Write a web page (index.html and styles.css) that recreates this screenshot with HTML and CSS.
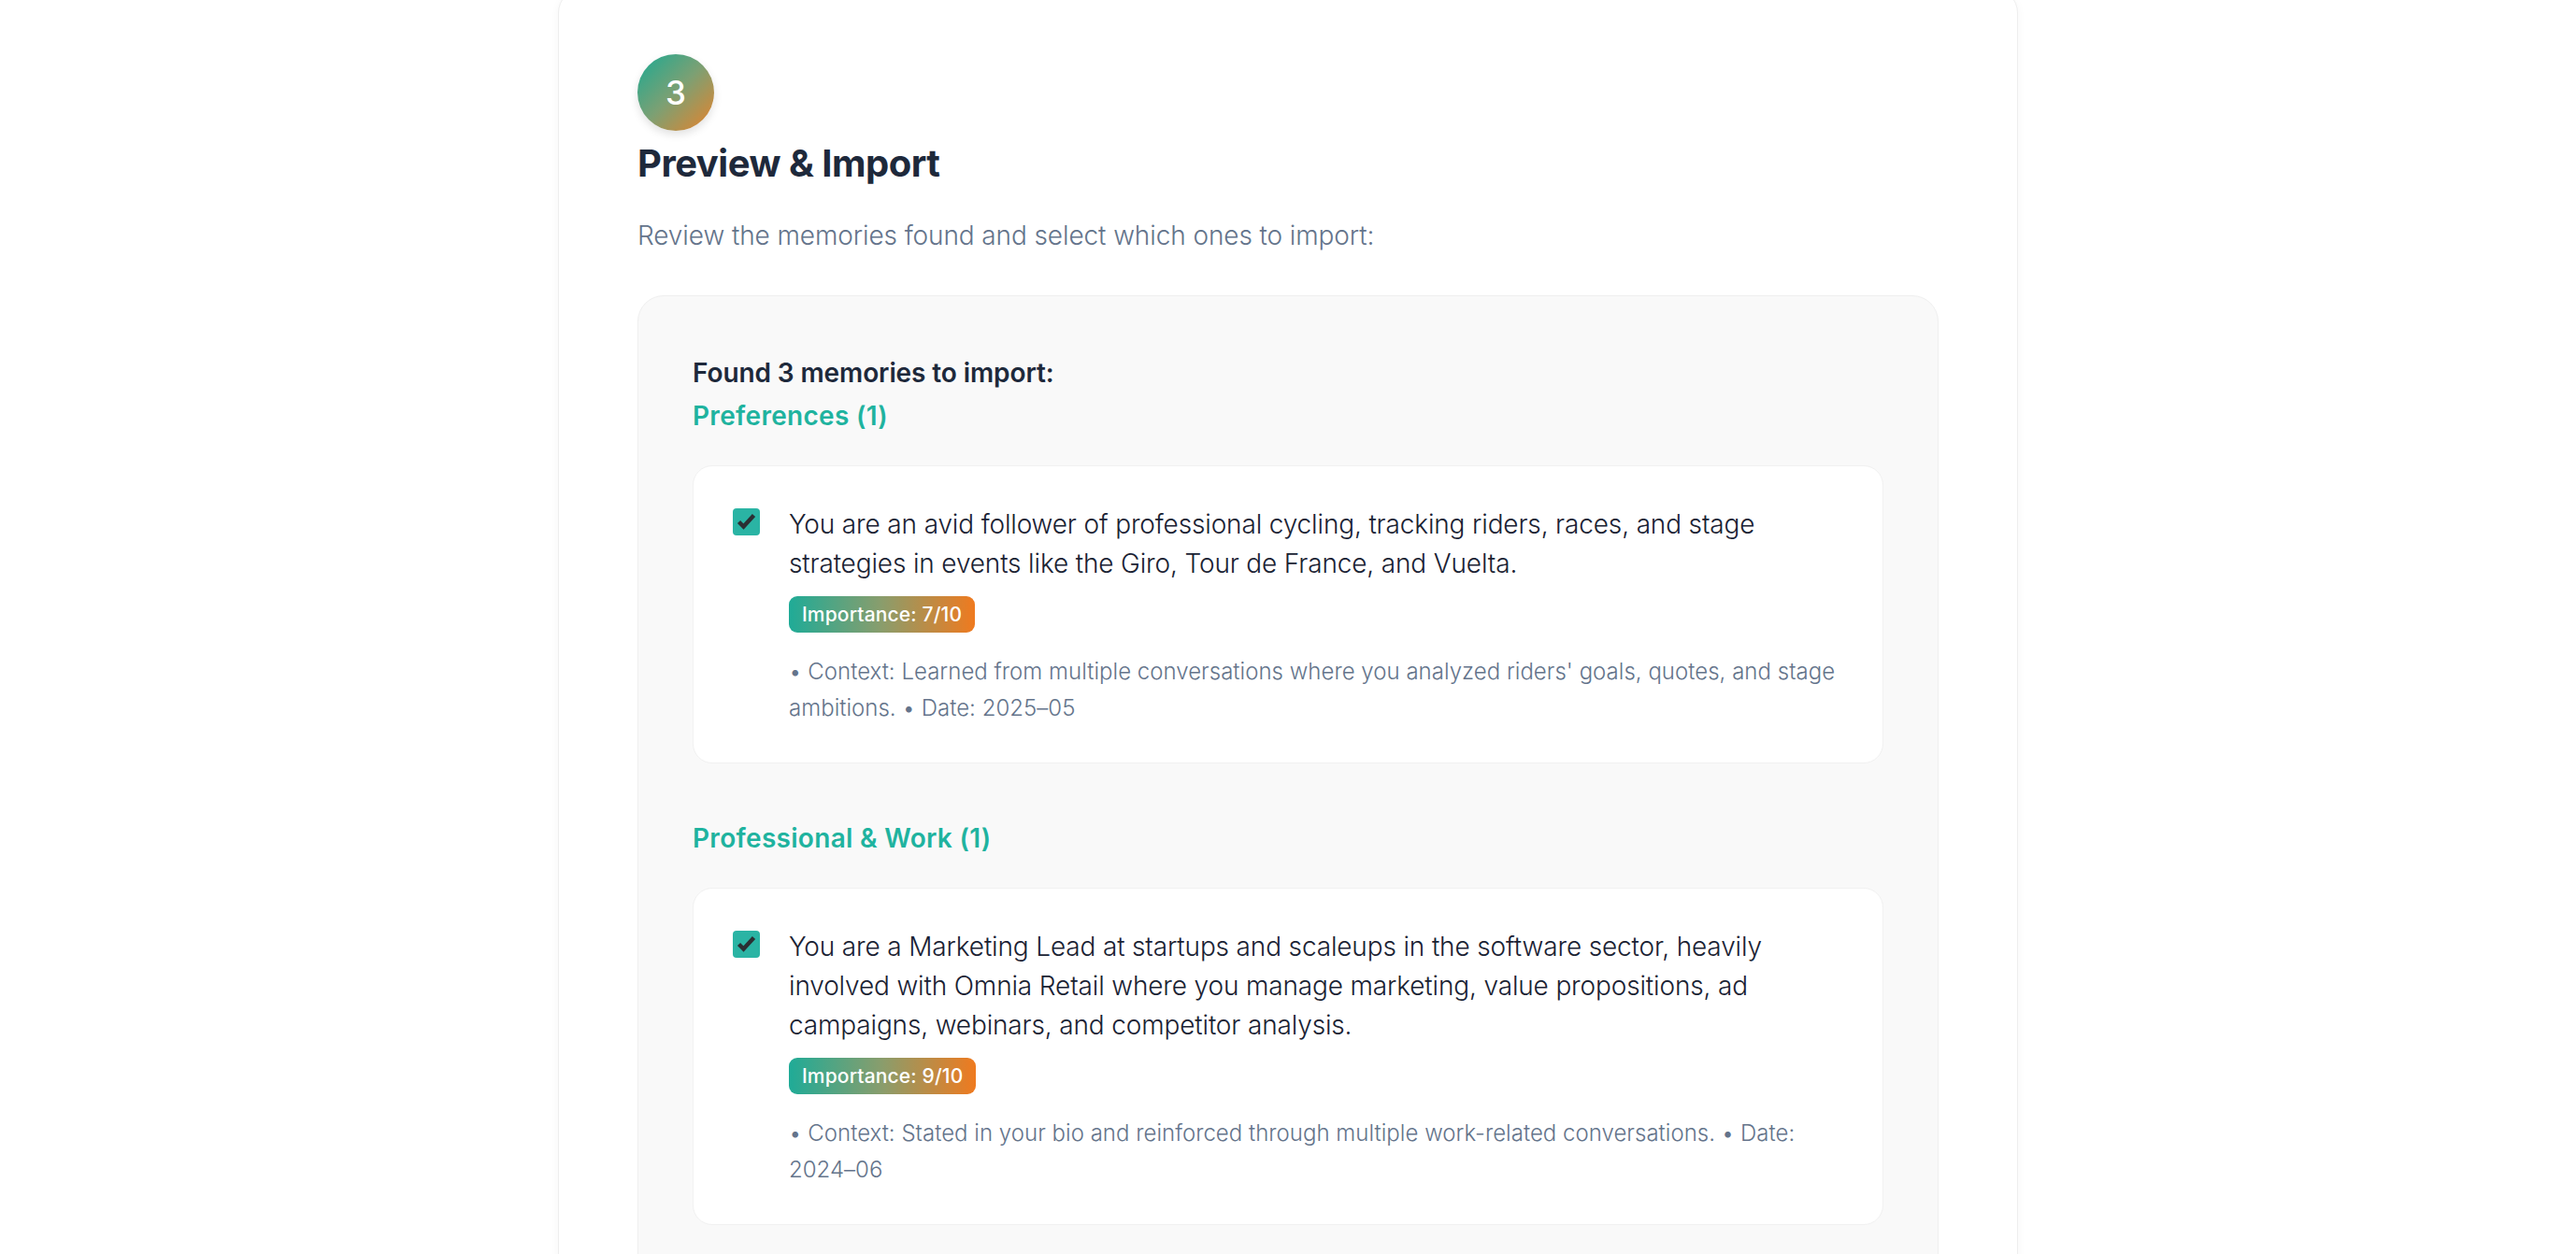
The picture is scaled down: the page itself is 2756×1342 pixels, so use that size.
FILE: index.html
```html
<!DOCTYPE html>
<html lang="en">
<head>
<meta charset="utf-8">
<title>Preview &amp; Import</title>
<link rel="stylesheet" href="styles.css">
</head>
<body>
<main class="page">
  <section class="step-card">
    <div class="step-num">3</div>
    <h2 class="step-title">Preview &amp; Import</h2>
    <p class="step-desc">Review the memories found and select which ones to import:</p>

    <div class="preview-box">
      <p class="found">Found 3 memories to import:</p>

      <div class="group">
        <h3 class="group-title">Preferences (1)</h3>
        <div class="memory">
          <span class="check"><svg viewBox="0 0 29 29" width="29" height="29"><path d="M6.5 14.5 L11.5 19.5 L22.5 7.5" fill="none" stroke="#2b2f33" stroke-width="4.4"/></svg></span>
          <div class="memory-body">
            <p class="memory-text">You are an avid follower of professional cycling, tracking riders, races, and stage strategies in events like the Giro, Tour de France, and Vuelta.</p>
            <span class="badge">Importance: 7/10</span>
            <p class="memory-meta">• Context: Learned from multiple conversations where you analyzed riders' goals, quotes, and stage ambitions. • Date: 2025&#8288;–&#8288;05</p>
          </div>
        </div>
      </div>

      <div class="group">
        <h3 class="group-title">Professional &amp; Work (1)</h3>
        <div class="memory">
          <span class="check"><svg viewBox="0 0 29 29" width="29" height="29"><path d="M6.5 14.5 L11.5 19.5 L22.5 7.5" fill="none" stroke="#2b2f33" stroke-width="4.4"/></svg></span>
          <div class="memory-body">
            <p class="memory-text">You are a Marketing Lead at startups and scaleups in the software sector, heavily involved with Omnia Retail where you manage marketing, value propositions, ad campaigns, webinars, and competitor analysis.</p>
            <span class="badge">Importance: 9/10</span>
            <p class="memory-meta">• Context: Stated in your bio and reinforced through multiple work-related conversations. • Date: 2024&#8288;–&#8288;06</p>
          </div>
        </div>
      </div>
    </div>
  </section>
</main>
</body>
</html>
```

FILE: styles.css
```css
* { box-sizing: border-box; }

html, body {
  margin: 0;
  padding: 0;
  background: #ffffff;
  overflow: hidden;
}

body {
  font-family: "Inter", "Liberation Sans", sans-serif;
  color: #1e293b;
}

.page {
  display: flex;
  justify-content: center;
}

.step-card {
  width: 1562px;
  margin-top: -14px;
  background: #ffffff;
  border: 1px solid #eeeeee;
  border-radius: 28px;
  box-shadow: 0 2px 10px rgba(0, 0, 0, 0.04);
  padding: 71px 84px 80px;
}

.step-num {
  width: 82px;
  height: 82px;
  border-radius: 50%;
  background: linear-gradient(135deg, #1aaa93 0%, #7da073 50%, #e8822a 100%);
  box-shadow: 0 4px 10px rgba(0, 0, 0, 0.12);
  color: #ffffff;
  font-size: 35px;
  font-weight: 500;
  display: flex;
  align-items: center;
  justify-content: center;
}

.step-title {
  margin: 11px 0 0;
  font-size: 40px;
  line-height: 48px;
  font-weight: 700;
  letter-spacing: -0.5px;
  color: #1e293b;
}

.step-desc {
  margin: 32px 0 0;
  font-size: 28px;
  line-height: 42px;
  font-weight: 300;
  color: #64748b;
  letter-spacing: -0.1px;
}

.preview-box {
  margin-top: 43px;
  background: #f9f9f9;
  border: 1px solid #efefef;
  border-radius: 28px;
  padding: 61px 58px 60px;
}

.found {
  margin: 0;
  font-size: 28px;
  line-height: 42px;
  font-weight: 600;
  color: #1e293b;
  letter-spacing: -0.1px;
}

.group + .group {
  margin-top: 59px;
}

.group-title {
  margin: 4px 0 32px;
  font-size: 28px;
  line-height: 42px;
  font-weight: 600;
  color: #1fb39f;
  letter-spacing: 0.3px;
}

.memory {
  background: #ffffff;
  border: 1px solid #f1f1f1;
  border-radius: 21px;
  padding: 41px 42px 39px;
  display: flex;
  gap: 31px;
  align-items: flex-start;
}

.check {
  flex: none;
  width: 29px;
  height: 29px;
  margin-top: 4px;
  border-radius: 4px;
  background: #2ab4a4;
  display: block;
}

.check svg { display: block; }

.memory-body {
  flex: 1;
  min-width: 0;
}

.memory-text {
  margin: 0;
  font-size: 28px;
  line-height: 42px;
  font-weight: 300;
  color: #1a2233;
  letter-spacing: -0.15px;
}

.badge {
  display: inline-block;
  margin-top: 14px;
  padding: 8px 14px;
  border-radius: 9px;
  background: linear-gradient(90deg, #1fab97 0%, #8a9d6c 50%, #ef7a1f 100%);
  color: #ffffff;
  font-size: 21px;
  line-height: 23px;
  font-weight: 500;
  letter-spacing: 0.15px;
}

.memory-meta {
  margin: 22px 0 0;
  font-size: 24px;
  line-height: 39px;
  font-weight: 300;
  color: #64748b;
  letter-spacing: 0.02px;
}
```
